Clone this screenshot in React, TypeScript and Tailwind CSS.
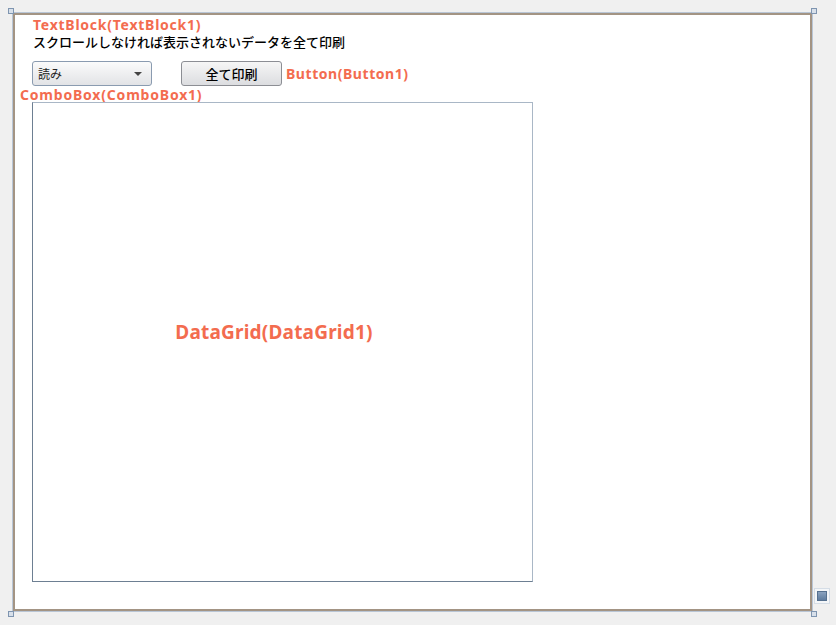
const jp = "font-['Meiryo','Noto_Sans_CJK_JP',sans-serif]";
const label = "font-['Noto_Sans','Noto_Sans_CJK_JP',sans-serif] font-bold text-[#f36c4f]";

function Handle({ className }: { className: string }) {
  return <div className={`absolute h-[6px] w-[6px] border border-[#7f95b0] bg-[#d8e0ea] ${className}`} />;
}

export default function App() {
  return (
    <div className="relative h-[625px] w-[836px] overflow-hidden bg-[#f0f0f0]">
      <div className="relative ml-[12px] mt-[12px] h-[600px] w-[801px] border border-[#b9c6d6]">
        <div className="flex h-full w-full flex-col border-2 border-[#a39484] bg-white">
          <div className={`${label} ml-[18px] mt-[2px] text-[14px] leading-[15px] tracking-[0.75px]`}>TextBlock(TextBlock1)</div>
          <div className={`${jp} ml-[18px] mt-[2px] text-[13px] font-medium leading-[16px] text-black`}>
            スクロールしなければ表示されないデータを全て印刷
          </div>
          <div className="ml-[17px] mt-[11px] flex items-center">
            <div className="flex h-[25px] w-[120px] items-center justify-between rounded-[3px] border border-[#8a9bb0] bg-gradient-to-b from-[#fbfbfb] to-[#e2e3e6] pl-[5px] pr-[9px]">
              <span className={`${jp} text-[12px] text-[#222]`}>読み</span>
              <span className="h-0 w-0 border-x-[4px] border-t-[4px] border-x-transparent border-t-[#444]" />
            </div>
            <div className={`${jp} ml-[29px] flex h-[25px] w-[101px] items-center justify-center rounded-[3px] border border-[#8c8e94] bg-gradient-to-b from-[#f6f6f6] to-[#dcdde0] text-[13px] font-medium text-black`}>
              全て印刷
            </div>
            <span className={`${label} ml-[4px] text-[14px] leading-[18px] tracking-[0.55px]`}>Button(Button1)</span>
          </div>
          <div className={`${label} ml-[5px] mt-[1px] text-[14px] leading-[15px] tracking-[0.8px]`}>ComboBox(ComboBox1)</div>
          <div className="ml-[17px] flex h-[480px] w-[501px] items-center justify-center border border-[#6d7f92] border-r-[#a9b7c6] border-t-[#a9b7c6] pb-[20px] pr-[17px]">
            <span className={`${label} text-[19px] tracking-[0.2px]`}>DataGrid(DataGrid1)</span>
          </div>
        </div>
        <Handle className="-left-[5px] -top-[5px]" />
        <Handle className="-right-[5px] -top-[5px]" />
        <Handle className="-bottom-[6px] -left-[5px]" />
        <Handle className="-bottom-[6px] -right-[5px]" />
        <div className="absolute -right-[18px] bottom-[7px] flex h-[16px] w-[16px] items-center justify-center border border-[#d5dde6] bg-[#f4f6f8]">
          <div className="h-[10px] w-[10px] border border-[#55708f] bg-gradient-to-b from-[#8aa2bf] to-[#5f7c9e]" />
        </div>
      </div>
    </div>
  );
}
